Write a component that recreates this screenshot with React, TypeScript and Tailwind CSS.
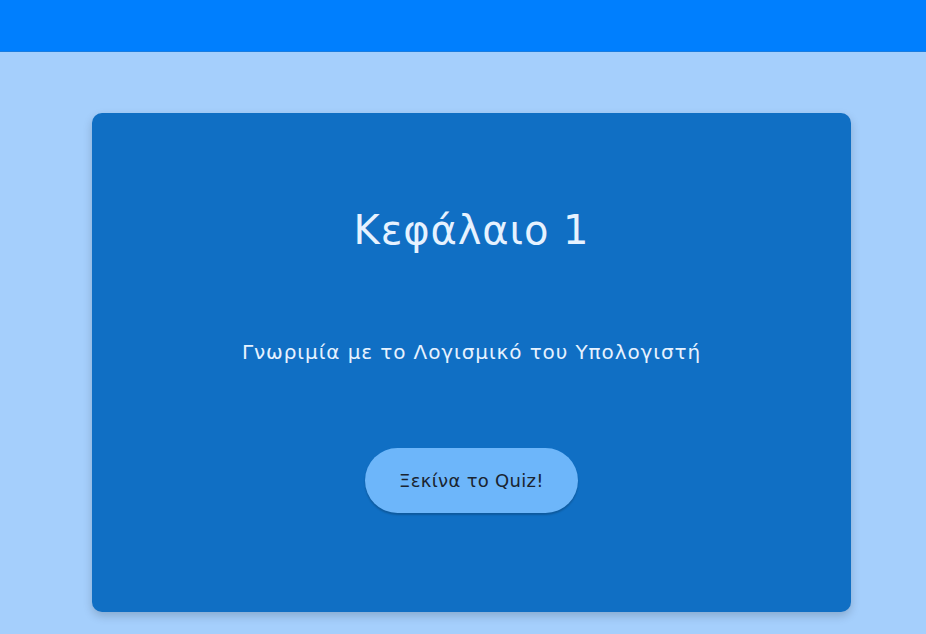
export default function App() {
  return (
    <div className="min-h-[634px] w-[926px] bg-[#a5cffc]" style={{ fontFamily: '"DejaVu Sans", sans-serif' }}>
      <div className="h-[52px] bg-[#007ffe] border-b border-[#1a7de0]" />
      <div className="pt-[61px] pl-[92px]">
        <div className="w-[759px] h-[499px] rounded-[10px] bg-[#106fc4] shadow-[0_4px_10px_rgba(0,0,0,0.18)] flex flex-col items-center">
          <h1 className="mt-[93px] text-[40px] leading-[48px] tracking-[0.9px] text-[#e6f2ff] font-normal">Κεφάλαιο 1</h1>
          <p className="mt-[84px] text-[20px] leading-[28px] tracking-[0.9px] text-[#e6f2ff]">Γνωριμία με το Λογισμικό του Υπολογιστή</p>
          <button className="mt-[82px] w-[213px] h-[65px] rounded-full bg-[#6db6fa] text-[18px] tracking-[0.3px] text-[#1a2430] shadow-[0_2px_2px_rgba(0,0,0,0.2)]">Ξεκίνα το Quiz!</button>
        </div>
      </div>
    </div>
  );
}
